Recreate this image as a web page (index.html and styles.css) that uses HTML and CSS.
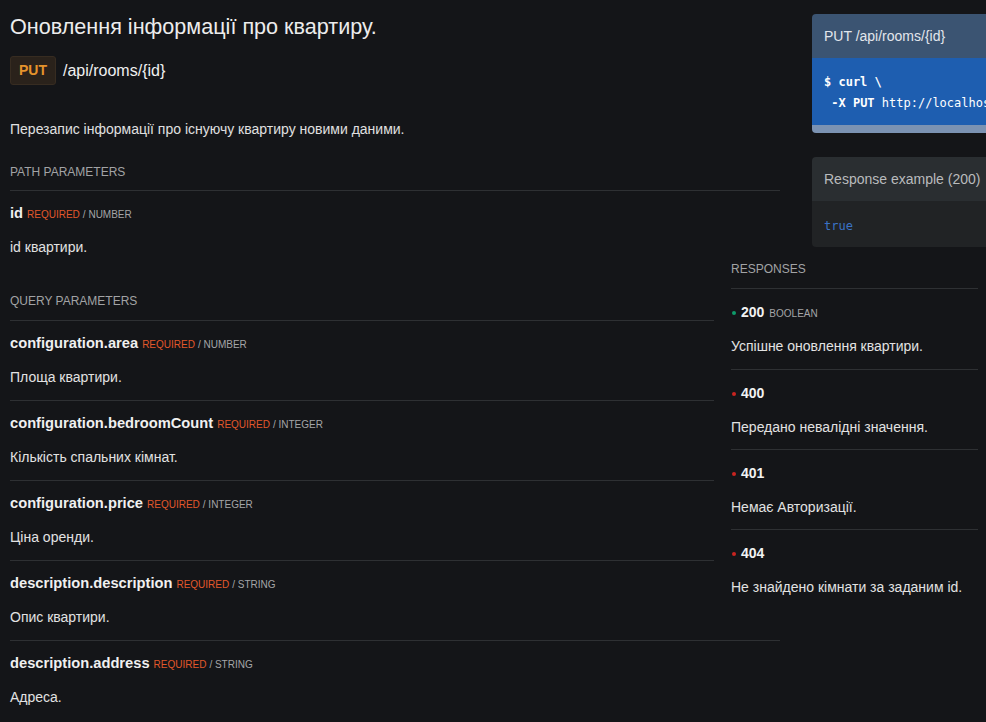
FILE: index.html
```html
<!DOCTYPE html>
<html lang="uk">
<head>
<meta charset="utf-8">
<title>PUT /api/rooms/{id}</title>
<link rel="stylesheet" href="styles.css">
</head>
<body>
<div class="page">
  <main class="main">
    <h1 class="title">Оновлення інформації про квартиру.</h1>
    <div class="endpoint">
      <span class="method">PUT</span>
      <span class="path">/api/rooms/{id}</span>
    </div>
    <p class="summary">Перезапис інформації про існуючу квартиру новими даними.</p>

    <section class="params params-path">
      <h2 class="section-title">Path parameters</h2>
      <div class="param">
        <div class="param-head"><span class="param-name">id</span><span class="req">REQUIRED</span><span class="type">/ NUMBER</span></div>
        <div class="param-desc">id квартири.</div>
      </div>
    </section>

    <aside class="responses">
      <h2 class="section-title resp-title">Responses</h2>
      <div class="resp">
        <div class="resp-head"><span class="dot dot-ok"></span><span class="code">200</span><span class="resp-type">BOOLEAN</span></div>
        <div class="param-desc">Успішне оновлення квартири.</div>
      </div>
      <div class="resp">
        <div class="resp-head"><span class="dot dot-err"></span><span class="code">400</span></div>
        <div class="param-desc">Передано невалідні значення.</div>
      </div>
      <div class="resp">
        <div class="resp-head"><span class="dot dot-err"></span><span class="code">401</span></div>
        <div class="param-desc">Немає Авторизації.</div>
      </div>
      <div class="resp">
        <div class="resp-head"><span class="dot dot-err"></span><span class="code">404</span></div>
        <div class="param-desc">Не знайдено кімнати за заданим id.</div>
      </div>
    </aside>

    <section class="params params-query">
      <h2 class="section-title">Query parameters</h2>
      <div class="param">
        <div class="param-head"><span class="param-name">configuration.area</span><span class="req">REQUIRED</span><span class="type">/ NUMBER</span></div>
        <div class="param-desc">Площа квартири.</div>
      </div>
      <div class="param">
        <div class="param-head"><span class="param-name">configuration.bedroomCount</span><span class="req">REQUIRED</span><span class="type">/ INTEGER</span></div>
        <div class="param-desc">Кількість спальних кімнат.</div>
      </div>
      <div class="param">
        <div class="param-head"><span class="param-name">configuration.price</span><span class="req">REQUIRED</span><span class="type">/ INTEGER</span></div>
        <div class="param-desc">Ціна оренди.</div>
      </div>
      <div class="param">
        <div class="param-head"><span class="param-name">description.description</span><span class="req">REQUIRED</span><span class="type">/ STRING</span></div>
        <div class="param-desc">Опис квартири.</div>
      </div>
      <div class="param">
        <div class="param-head"><span class="param-name">description.address</span><span class="req">REQUIRED</span><span class="type">/ STRING</span></div>
        <div class="param-desc">Адреса.</div>
      </div>
    </section>
  </main>

  <aside class="samples">
    <div class="card card-request">
      <div class="card-head">PUT /api/rooms/{id}</div>
      <pre class="card-code"><b>$ curl \</b>
 <b>-X PUT</b> http://localhost:8080/api/rooms/{id}</pre>
      <div class="card-scroll"></div>
    </div>
    <div class="card card-response">
      <div class="card-head">Response example (200)</div>
      <pre class="card-code"><span class="kw">true</span></pre>
    </div>
  </aside>
</div>
</body>
</html>
```

FILE: styles.css
```css
html, body {
  margin: 0;
  padding: 0;
  overflow: hidden;
  background: #141518;
}

body {
  font-family: "Liberation Sans", Arial, sans-serif;
  color: #e6e6e6;
}

.page {
  display: flex;
  align-items: flex-start;
  padding-top: 14px;
  width: 1250px;
}

.main {
  width: 770px;
  margin-left: 10px;
  flex: none;
}

.title {
  margin: 0;
  font-size: 21.6px;
  font-weight: normal;
  line-height: 26px;
  color: #ececec;
}

.endpoint {
  display: flex;
  align-items: center;
  gap: 7px;
  margin-top: 16px;
}

.method {
  box-sizing: border-box;
  height: 29px;
  line-height: 27px;
  padding: 0 8px;
  border: 1px solid #372c21;
  border-radius: 3px;
  background: #2a221b;
  color: #e5932c;
  font-weight: bold;
  font-size: 14px;
}

.path {
  font-size: 16px;
  color: #f0f0f0;
}

.summary {
  margin: 34px 0 0;
  font-size: 14px;
  line-height: 20px;
  color: #e0e0e0;
}

.params-path {
  margin-top: 25px;
}

.params-path .section-title {
  padding-bottom: 10px;
}

.params-query {
  padding-top: 23px;
}

.params-query .section-title {
  padding-bottom: 11px;
}

.section-title {
  display: flow-root;
  margin: 0;
  padding-bottom: 12px;
  border-bottom: 1px solid #2e3033;
  font-size: 12px;
  line-height: 16px;
  font-weight: normal;
  text-transform: uppercase;
  color: #a2a3a5;
}

.param {
  display: flow-root;
  padding: 11px 0 13px;
}

.param + .param {
  border-top: 1px solid #2e3033;
}

.param-head {
  display: flex;
  align-items: baseline;
  gap: 4px;
  height: 22px;
  line-height: 22px;
}

.param-name {
  font-size: 14.7px;
  font-weight: bold;
  color: #f0f0f0;
}

.req {
  color: #e2582b;
  font-size: 10px;
}

.type {
  color: #a4a5a7;
  font-size: 10px;
  margin-left: -1px;
}

.param-desc {
  margin-top: 13px;
  font-size: 14px;
  line-height: 20px;
  color: #e2e2e2;
}

/* responses */
.responses {
  float: right;
  width: 247px;
  margin: -12px -198px 0 17px;
}

.resp-title {
  line-height: 20px;
  padding-top: 1px;
  padding-bottom: 9px;
}

.resp {
  padding: 12px 0 12px;
}

.resp:first-of-type {
  padding-bottom: 13px;
}

.resp + .resp {
  border-top: 1px solid #2e3033;
}

.resp-head {
  display: flex;
  align-items: baseline;
  height: 22px;
  line-height: 22px;
}

.dot {
  align-self: center;
  width: 4px;
  height: 4px;
  border-radius: 50%;
  margin: 1px 5px 0 1px;
}

.dot-ok { background: #0e9a6a; }
.dot-err { background: #c92420; }

.code {
  font-size: 14px;
  font-weight: bold;
  color: #f2f2f2;
}

.resp-type {
  margin-left: 5px;
  font-size: 10px;
  color: #a4a5a7;
}

/* samples */
.samples {
  flex: none;
  width: 380px;
  margin-left: 32px;
}

.card {
  border-radius: 4px;
  overflow: hidden;
}

.card + .card {
  margin-top: 24px;
}

.card-head {
  height: 44px;
  line-height: 44px;
  padding: 0 12px;
  font-size: 14px;
}

.card-code {
  margin: 0;
  padding: 14px 12px 11px;
  font-family: "DejaVu Sans Mono", monospace;
  font-size: 12px;
  line-height: 21px;
  white-space: pre;
}

.card-request .card-head {
  background: #3b5472;
  color: #e2e6ec;
}

.card-request .card-code {
  background: #1e5eb0;
  color: #ffffff;
}

.card-scroll {
  height: 8px;
  background: #7b92b2;
}

.card-response .card-head {
  background: #2a2e31;
  color: #b9bbbd;
}

.card-response .card-code {
  background: #212325;
  padding: 15px 12px 10px;
}

.kw {
  color: #3b73c6;
}
```
